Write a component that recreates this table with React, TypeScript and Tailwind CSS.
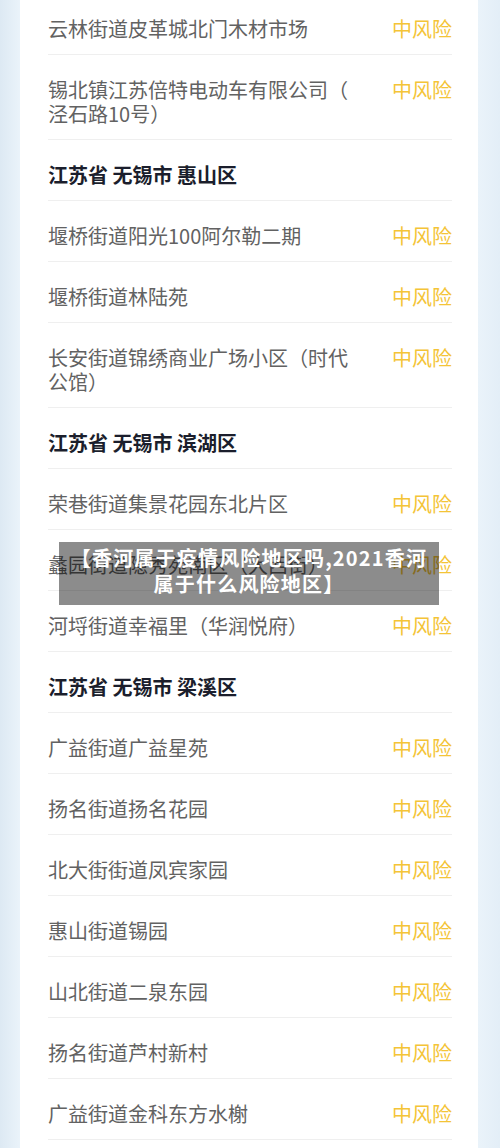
import React from "react";

type Row =
  | { kind: "header"; text: string }
  | { kind: "item"; lines: string[] };

const rows: Row[] = [
  { kind: "item", lines: ["云林街道皮革城北门木材市场"] },
  { kind: "item", lines: ["锡北镇江苏倍特电动车有限公司（", "泾石路10号）"] },
  { kind: "header", text: "江苏省 无锡市 惠山区" },
  { kind: "item", lines: ["堰桥街道阳光100阿尔勒二期"] },
  { kind: "item", lines: ["堰桥街道林陆苑"] },
  { kind: "item", lines: ["长安街道锦绣商业广场小区（时代", "公馆）"] },
  { kind: "header", text: "江苏省 无锡市 滨湖区" },
  { kind: "item", lines: ["荣巷街道集景花园东北片区"] },
  { kind: "item", lines: ["蠡园街道隐秀苑南区（大西街）"] },
  { kind: "item", lines: ["河埒街道幸福里（华润悦府）"] },
  { kind: "header", text: "江苏省 无锡市 梁溪区" },
  { kind: "item", lines: ["广益街道广益星苑"] },
  { kind: "item", lines: ["扬名街道扬名花园"] },
  { kind: "item", lines: ["北大街街道凤宾家园"] },
  { kind: "item", lines: ["惠山街道锡园"] },
  { kind: "item", lines: ["山北街道二泉东园"] },
  { kind: "item", lines: ["扬名街道芦村新村"] },
  { kind: "item", lines: ["广益街道金科东方水榭"] },
];

const font = { fontFamily: '"Noto Sans CJK SC", "Noto Sans", sans-serif' };

export default function App() {
  return (
    <div
      className="relative w-[500px] h-[1148px] overflow-hidden bg-[#e6f0f8] flex"
      style={font}
    >
      <div className="w-[20px] shrink-0 bg-gradient-to-r from-[#dde9f3] to-[#eaf3fa]" />
      <div className="w-[458px] shrink-0 bg-white pl-[28px] pr-[26px]">
        {rows.map((r, i) => (
          <div
            key={i}
            className={`flex justify-between border-b border-[#efefef] pb-[13px] ${
              i === 0 ? "pt-[17px]" : "pt-[23px]"
            }`}
          >
            {r.kind === "header" ? (
              <div className="text-[20px] leading-[24px] font-bold text-[#1b1e2c]">
                {r.text}
              </div>
            ) : (
              <>
                <div className="text-[20px] leading-[24px] text-[#626262]">
                  {r.lines.map((l, j) => (
                    <div key={j}>{l}</div>
                  ))}
                </div>
                <div className="text-[20px] leading-[24px] text-[#f4c437] shrink-0">
                  中风险
                </div>
              </>
            )}
          </div>
        ))}
      </div>
      <div className="flex-1 bg-gradient-to-r from-[#eaf3fa] to-[#e3eef7]" />
      <div className="absolute left-[59px] top-[542px] w-[380px] h-[63px] bg-[rgba(0,0,0,0.45)] pt-[3px] text-center text-white font-bold text-[20px] leading-[26px] tracking-[1.2px]">
        <div>【香河属于疫情风险地区吗,2021香河</div>
        <div>属于什么风险地区】</div>
      </div>
    </div>
  );
}
